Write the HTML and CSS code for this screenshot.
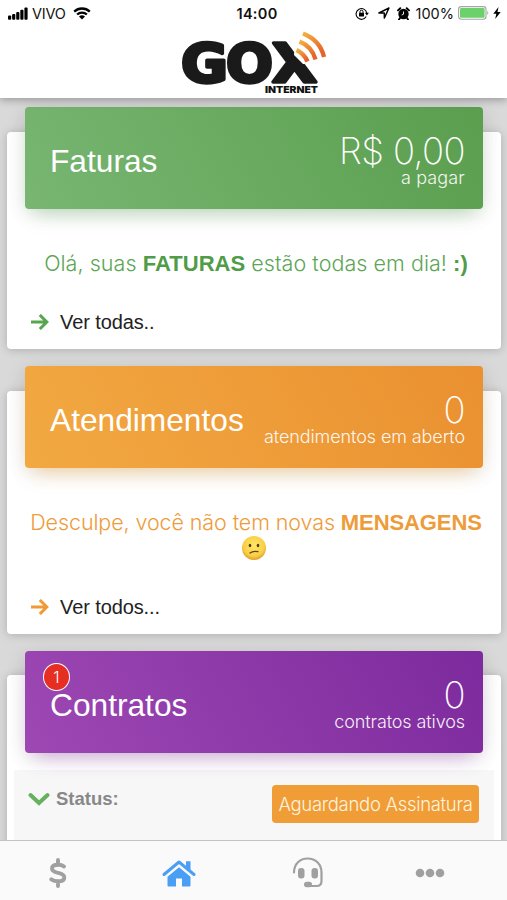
FILE: index.html
```html
<!DOCTYPE html>
<html lang="pt-BR">
  <head>
    <meta charset="UTF-8" />
    <meta name="viewport" content="width=device-width, initial-scale=1.0" />
    <title>GOX Internet</title>
    <link rel="stylesheet" href="styles.css">
  </head>
  <body>
    <header class="topbar">
      <div class="status-bar">
        <div class="status-left">
          <svg class="signal" width="20" height="13" viewBox="0 0 20 13">
            <rect x="0" y="8.5" width="3.2" height="4.2" rx="1" />
            <rect x="4.1" y="7" width="3.2" height="5.7" rx="1" />
            <rect x="8.2" y="5" width="3.2" height="7.7" rx="1" />
            <rect x="12.3" y="2.8" width="3.2" height="9.9" rx="1" />
            <rect x="16.4" y="0.5" width="3.2" height="12.2" rx="1" />
          </svg>
          <span class="carrier">VIVO</span>
          <svg class="wifi" width="18" height="13" viewBox="0 0 18 13">
            <path d="M1.2 4.6a11.3 11.3 0 0 1 15.6 0M4.1 7.5a7.1 7.1 0 0 1 9.8 0" fill="none" stroke="#000" stroke-width="2.3" />
            <path d="M9 12.5 6 9.6a4.4 4.4 0 0 1 6 0z" />
          </svg>
        </div>
        <div class="clock">14:00</div>
        <div class="status-right">
          <svg class="lock" width="14" height="13" viewBox="0 0 14 13">
            <path d="M11.2 9.6A5.4 5.4 0 1 1 11.8 6" fill="none" stroke="#000" stroke-width="1.1" />
            <path d="M9.9 5.8h4l-2 2.7z" />
            <rect x="4" y="5.7" width="5" height="3.7" rx=".5" />
            <path d="M5 6V4.7a1.5 1.5 0 0 1 3 0V6" fill="none" stroke="#000" />
          </svg>
          <svg class="arrow" width="12" height="12" viewBox="0 0 12 12">
            <path d="M.9 6 11 1 6.3 11.1V6z" fill="none" stroke="#000" stroke-width="1.4" stroke-linejoin="round" />
          </svg>
          <svg class="alarm" width="13" height="13" viewBox="0 0 13 13">
            <circle cx="6.5" cy="7" r="5.2" />
            <path d="M1 3.400 3.300 1.200M12 3.400 9.700 1.200M3 11l-1 1.500M10 11l1 1.500" stroke="#000" stroke-width="1.900" stroke-linecap="round" />
            <path d="M6.5 4.500v2.700L4.600 8" fill="none" stroke="#fff" stroke-width=".9" />
          </svg>
          <span class="percent">100%</span>
          <svg class="battery" width="32" height="14" viewBox="0 0 32 14">
            <rect x=".6" y=".6" width="27.4" height="12.6" rx="2.6" fill="#fff" stroke="#a5a5a5" stroke-width="1.1" />
            <rect x="2" y="2" width="24.6" height="9.8" rx="1.2" fill="#6bd26b" />
            <path d="M29.3 4.8q2 2.1 0 4.2z" fill="#a5a5a5" />
          </svg>
          <svg class="bolt" width="8" height="12" viewBox="0 0 8 12">
            <path d="M5.5 0 .3 6.8h3L2.2 12 7.7 5H4.5z" />
          </svg>
        </div>
      </div>
      <svg class="logo" width="150" height="68" viewBox="0 0 150 68" role="img" aria-label="GOX Internet">
        <defs>
          <linearGradient id="wave" x1="0" y1="0" x2="0.5" y2="1">
            <stop offset="0" stop-color="#f3b03c" />
            <stop offset="1" stop-color="#e5622c" />
          </linearGradient>
        </defs>
        <g class="logo-name">
          <text x="3" y="54" textLength="47" lengthAdjust="spacingAndGlyphs">G</text>
          <text x="48" y="54" textLength="47" lengthAdjust="spacingAndGlyphs">O</text>
          <text x="94" y="54" textLength="45" lengthAdjust="spacingAndGlyphs">X</text>
        </g>
        <path class="logo-gap" d="M116 27 117 8 150 0V32L134 36 125 36z" />
        <g fill="none" stroke="url(#wave)" stroke-width="4.4">
          <path d="M118.500 22Q126 25.500 129.500 33.500" />
          <path d="M121.500 13.500Q134 18.500 137.500 31.500" />
          <path d="M125 5.500Q142 12 146 29" />
        </g>
        <text class="logo-sub" x="87" y="65" textLength="53" lengthAdjust="spacingAndGlyphs">INTERNET</text>
      </svg>
    </header>

    <main class="content">
      <section class="card card-faturas">
        <div class="card-head green">
          <h2>Faturas</h2>
          <div class="total">
            <p class="amount">R$ 0,00</p>
            <p class="caption cap-pagar">a pagar</p>
          </div>
        </div>
        <p class="message msg-green">Olá, suas <b>FATURAS</b> estão todas em dia! <b>:)</b></p>
        <a class="more more-green">
          <svg width="18" height="16" viewBox="0 0 18 16"><path d="M0 8h15.500M8.800 1 15.800 8 8.800 15" /></svg>
          <span>Ver todas..</span>
        </a>
      </section>

      <section class="card card-atendimentos">
        <div class="card-head orange">
          <h2>Atendimentos</h2>
          <div class="total">
            <p class="amount">0</p>
            <p class="caption cap-aberto">atendimentos em aberto</p>
          </div>
        </div>
        <p class="message msg-orange">Desculpe, você não tem novas <b>MENSAGENS</b></p>
        <svg class="face" width="26" height="26" viewBox="0 0 26 26">
          <defs>
            <radialGradient id="skin" cx=".5" cy=".4" r=".62">
              <stop offset="0" stop-color="#ffe86a" />
              <stop offset=".7" stop-color="#f9cf45" />
              <stop offset="1" stop-color="#dd9526" />
            </radialGradient>
          </defs>
          <circle cx="13" cy="13" r="12" fill="url(#skin)" />
          <ellipse cx="9" cy="10.500" rx="1.300" ry="1.800" fill="#5b3a0c" />
          <ellipse cx="17" cy="10.500" rx="1.300" ry="1.800" fill="#5b3a0c" />
          <path d="M9 18q3-2.500 8-1.300" fill="none" stroke="#6b430e" stroke-width="1.300" stroke-linecap="round" />
        </svg>
        <a class="more more-orange">
          <svg width="18" height="16" viewBox="0 0 18 16"><path d="M0 8h15.500M8.800 1 15.800 8 8.800 15" /></svg>
          <span>Ver todos...</span>
        </a>
      </section>

      <section class="card card-contratos">
        <div class="card-head purple">
          <span class="badge">1</span>
          <h2>Contratos</h2>
          <div class="total">
            <p class="amount">0</p>
            <p class="caption cap-ativos">contratos ativos</p>
          </div>
        </div>
        <div class="contract">
          <svg class="chevron" width="22" height="14" viewBox="0 0 22 14"><path d="M2.500 3l8.500 8 8.500-8" /></svg>
          <span class="label">Status:</span>
          <span class="tag">Aguardando Assinatura</span>
        </div>
      </section>
    </main>

    <nav class="tabs">
      <a class="tab">
        <svg width="18" height="30" viewBox="0 0 18 30">
          <path d="M15 8.400C13.500 7.200 11.500 6.700 9 6.700c-3.700 0-6 1.400-6 3.900 0 5.800 12.300 2.900 12.300 8.800 0 2.500-2.500 3.900-6.300 3.900-2.700 0-5-.8-6.700-2M9 2v4.500M9 23.500V28" fill="none" stroke="#a0a0a0" stroke-width="3.900" stroke-linecap="round" />
        </svg>
      </a>
      <a class="tab">
        <svg width="34" height="28" viewBox="0 0 34 28">
          <path d="M2 15.500 17 3l15 12.500" fill="none" stroke="#4a9ff5" stroke-width="3" stroke-linecap="round" stroke-linejoin="round" />
          <path d="M24 2.200h4.500v10L24 8.500zM17 8.200l11.500 9.500V26.500q0 1-1 1H20v-8h-6v8H6.500q-1 0-1-1v-8.800z" fill="#4a9ff5" />
        </svg>
      </a>
      <a class="tab">
        <svg width="32" height="31" viewBox="0 0 32 31">
          <path d="M2 15.500C2 7 8 1.500 15.700 1.500S29.500 7 29.500 15.500V24q0 5-5 5H15" fill="none" stroke="#a0a0a0" stroke-width="2.200" stroke-linecap="round" />
          <rect x="6" y="11" width="6.500" height="10.500" rx="3" fill="#a0a0a0" />
          <rect x="19.500" y="11" width="6.500" height="10.500" rx="3" fill="#a0a0a0" />
          <rect x="12" y="24.800" width="8" height="5.500" rx="2.700" fill="#a0a0a0" />
        </svg>
      </a>
      <a class="tab">
        <svg width="30" height="10" viewBox="0 0 30 10" fill="#a0a0a0">
          <circle cx="5" cy="5" r="4.300" />
          <circle cx="15" cy="5" r="4.300" />
          <circle cx="25" cy="5" r="4.300" />
        </svg>
      </a>
    </nav>
  </body>
</html>
```
FILE: styles.css
```css
* {
  margin: 0;
  padding: 0;
  box-sizing: border-box;
}

body {
  height: 900px;
  overflow: hidden;
  display: flex;
  flex-direction: column;
  background: #d9d9d9;
  font-family: "Liberation Sans", Arial, sans-serif;
  color: #222;
}

/* TOP */
.topbar {
  position: relative;
  z-index: 2;
  height: 98px;
  flex: none;
  background: #fff;
  box-shadow: 0 2px 8px rgba(0, 0, 0, 0.3);
}

.status-bar {
  height: 26px;
  padding: 0 6px 0 8px;
  display: grid;
  grid-template-columns: 1fr auto 1fr;
  align-items: center;
  font-family: Inter, "Liberation Sans", sans-serif;
  font-size: 14.5px;
  color: #111;
}

.status-left,
.status-right {
  display: flex;
  align-items: center;
}

.status-right {
  justify-content: flex-end;
}

.carrier {
  margin: 0 7px 0 4px;
  letter-spacing: -0.2px;
}

.clock {
  padding-left: 5px;
  font-weight: 600;
  letter-spacing: 0.3px;
}

.arrow {
  margin-left: 9px;
}

.alarm {
  margin-left: 7px;
}

.percent {
  margin: 0 4px 0 6px;
}

.bolt {
  margin-left: 3px;
}

.logo {
  display: block;
  margin: 2px 0 0 178px;
}

.logo-name {
  font-family: "DejaVu Sans", sans-serif;
  font-weight: bold;
  font-size: 54px;
  fill: #1a1a1a;
  stroke: #1a1a1a;
  stroke-width: 3.5px;
  stroke-linejoin: round;
}

.logo-gap {
  fill: #fff;
}

.logo-sub {
  font-family: Inter, sans-serif;
  font-weight: 900;
  font-size: 9.5px;
  fill: #111;
  stroke: #fff;
  stroke-width: 2px;
  paint-order: stroke;
}

/* CARDS */
.content {
  flex: 1;
  min-height: 0;
  overflow: hidden;
  padding: 34px 6px 0 7px;
  display: flex;
  flex-direction: column;
  gap: 42px;
}

.card {
  flex: none;
  background: #fff;
  border-radius: 4px;
  padding: 0 18px;
  box-shadow: 0 1px 10px rgba(0, 0, 0, 0.2);
}

.card-faturas {
  height: 217px;
}

.card-atendimentos {
  height: 243px;
}

.card-contratos {
  height: 230px;
  margin-top: -1px;
  padding: 0 7px;
}

.card-head {
  position: relative;
  height: 102px;
  margin-top: -25px;
  padding: 0 18px 0 25px;
  border-radius: 4px;
  display: flex;
  align-items: center;
  justify-content: space-between;
  color: #fff;
}

.card-contratos .card-head {
  margin: -24px 11px 0;
}

.green {
  background: linear-gradient(60deg, #78b672, #5a9e4e);
  box-shadow: 0 12px 20px -10px rgba(76, 175, 80, 0.35), 0 4px 20px rgba(0, 0, 0, 0.12);
}

.orange {
  background: linear-gradient(60deg, #f2a942, #ea9030);
  box-shadow: 0 12px 20px -10px rgba(255, 152, 0, 0.35), 0 4px 20px rgba(0, 0, 0, 0.12);
}

.purple {
  background: linear-gradient(60deg, #9d48b3, #7d2a9e);
  box-shadow: 0 12px 20px -10px rgba(156, 39, 176, 0.35), 0 4px 20px rgba(0, 0, 0, 0.12);
}

h2 {
  font-size: 31.7px;
  font-weight: normal;
  padding-top: 6px;
}

.total {
  text-align: right;
  font-family: Inter, "Liberation Sans", sans-serif;
  font-weight: 300;
  padding-top: 3px;
}

.amount {
  font-size: 36.5px;
  line-height: 37px;
  font-weight: 250;
  letter-spacing: -0.6px;
}

.caption {
  font-size: 18px;
  line-height: 16px;
  letter-spacing: -0.1px;
  opacity: 0.92;
}

.cap-pagar {
  letter-spacing: 0.15px;
}

.message {
  margin: 40px -12px 0;
  text-align: center;
  white-space: nowrap;
  font-family: Inter, "Liberation Sans", sans-serif;
  font-weight: 300;
  font-size: 21.5px;
  line-height: 28px;
}

.message b {
  font-family: "Liberation Sans", Arial, sans-serif;
  font-weight: bold;
  font-size: 22px;
}

.msg-green {
  padding-left: 4px;
  letter-spacing: 0.05px;
  color: #5ba653;
}

.msg-green b {
  color: #4f9c49;
}

.msg-orange {
  padding-left: 4px;
  letter-spacing: -0.1px;
  color: #ee9b3a;
}

.face {
  display: block;
  margin: -2px auto 0;
}

.more {
  display: flex;
  align-items: center;
  gap: 11px;
  margin: 31px 0 0 6px;
  font-size: 20px;
  line-height: 26px;
  letter-spacing: -0.1px;
}

.more-orange {
  margin-top: 33px;
}

.more path {
  fill: none;
  stroke-width: 3;
}

.more-green path {
  stroke: #56a64e;
}

.more-orange path {
  stroke: #f09a35;
}

.badge {
  position: absolute;
  left: 18px;
  top: 12px;
  width: 27px;
  height: 28px;
  border: 1px solid #fff;
  border-radius: 50%;
  background: #e62e22;
  text-align: center;
  font-family: Inter, sans-serif;
  font-weight: 300;
  font-size: 16px;
  line-height: 26px;
}

/* CONTRACT */
.contract {
  height: 90px;
  margin-top: 17px;
  padding: 15px 15px 0 14px;
  display: flex;
  align-items: flex-start;
  background: #f7f7f7;
}

.chevron {
  margin-top: 7px;
}

.chevron path {
  fill: none;
  stroke: #66b05f;
  stroke-width: 4;
  stroke-linecap: round;
}

.label {
  margin-left: 6px;
  padding-top: 3px;
  font-size: 18.5px;
  line-height: 21px;
  font-weight: bold;
  color: #888;
}

.tag {
  margin-left: auto;
  width: 207px;
  height: 38px;
  border-radius: 4px;
  background: #f09d37;
  color: #fff3df;
  text-align: center;
  font-family: Inter, "Liberation Sans", sans-serif;
  font-weight: 300;
  font-size: 18.5px;
  line-height: 38px;
  letter-spacing: -0.3px;
}

/* TABS */
.tabs {
  position: relative;
  z-index: 2;
  flex: none;
  height: 60px;
  border-top: 1px solid #c4c4c4;
  background: #fafafa;
  display: grid;
  grid-template-columns: 116px 126px 132px 112px;
}

.tab {
  display: flex;
  align-items: center;
  justify-content: center;
  padding-top: 4px;
}
```
